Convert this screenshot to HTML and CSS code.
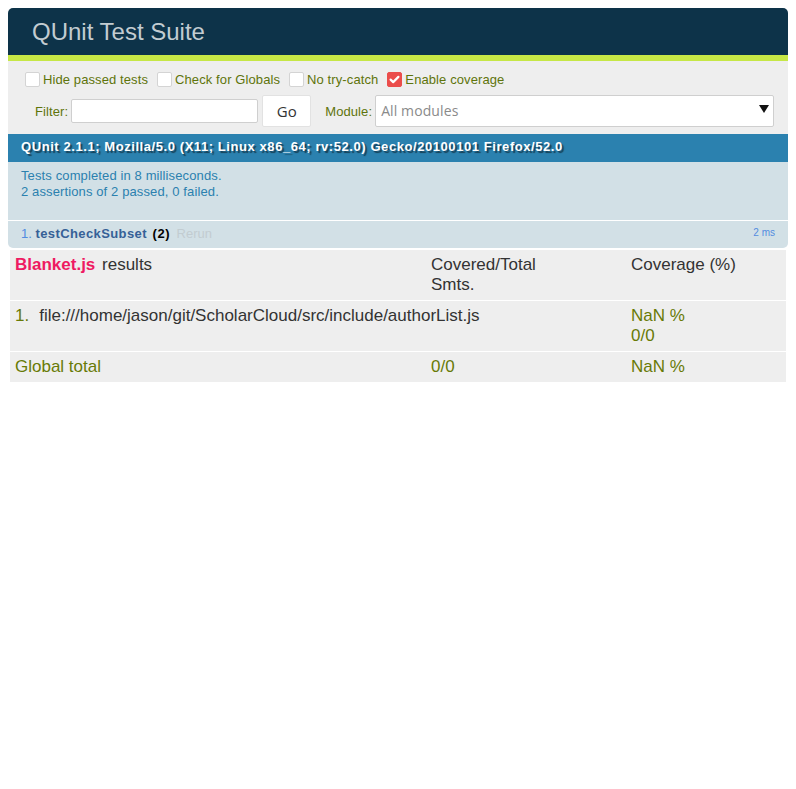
FILE: index.html
```html
<!DOCTYPE html>
<html lang="en">
<head>
<meta charset="utf-8">
<title>QUnit Test Suite</title>
<link rel="stylesheet" href="styles.css">
</head>
<body>
<div class="qunit">
  <h1 class="qunit-header">QUnit Test Suite</h1>
  <div class="qunit-banner"></div>
  <div class="toolbar">
    <div class="opts">
      <label class="opt"><span class="cb"></span>Hide passed tests</label>
      <label class="opt"><span class="cb"></span>Check for Globals</label>
      <label class="opt"><span class="cb"></span>No try-catch</label>
      <label class="opt"><span class="cb checked"><svg viewBox="0 0 15 15" width="15" height="15"><path d="M3.6 7.6 L6.2 10.1 L11.4 4.9" fill="none" stroke="#fff" stroke-width="2.2" stroke-linecap="round" stroke-linejoin="round"/></svg></span>Enable coverage</label>
    </div>
    <div class="filters">
      <span class="flabel">Filter:</span>
      <span class="input"></span>
      <span class="btn">Go</span>
      <span class="mlabel">Module:</span>
      <div class="select"><span>All modules</span><svg class="arrow" viewBox="0 0 10 8" width="10" height="8"><polygon points="0,0 10,0 5,8" fill="#111"/></svg></div>
    </div>
  </div>
  <div class="ua">QUnit 2.1.1; Mozilla/5.0 (X11; Linux x86_64; rv:52.0) Gecko/20100101 Firefox/52.0</div>
  <div class="result">Tests completed in 8 milliseconds.<br>2 assertions of 2 passed, 0 failed.</div>
  <ol class="tests">
    <li class="test pass"><span class="num">1.</span> <strong class="tname">testCheckSubset</strong> <b class="counts">(2)</b> <a class="rerun">Rerun</a><span class="runtime">2 ms</span></li>
  </ol>
</div>
<div class="blanket">
  <div class="brow">
    <div class="bcell"><span class="brand">Blanket.js</span> results</div>
    <div class="bcell">Covered/Total<br>Smts.</div>
    <div class="bcell">Coverage (%)</div>
  </div>
  <div class="brow">
    <div class="bcell"><span class="ok bnum">1.</span>file:///home/jason/git/ScholarCloud/src/include/authorList.js</div>
    <div class="bcell"></div>
    <div class="bcell ok">NaN %<br>0/0</div>
  </div>
  <div class="brow last">
    <div class="bcell ok">Global total</div>
    <div class="bcell ok">0/0</div>
    <div class="bcell ok">NaN %</div>
  </div>
</div>
</body>
</html>
```
FILE: styles.css
```css
body {
  margin: 8px;
  background: #fff;
  font-family: "Liberation Sans", Arial, sans-serif;
}

.qunit {
  font-family: "Liberation Sans", Arial, sans-serif;
}

.qunit-header {
  margin: 0;
  padding: 12px 0 11px 24px;
  font-size: 24px;
  line-height: 24px;
  font-weight: 400;
  color: #c2ccd1;
  background: #0d3349;
  border-radius: 5px 5px 0 0;
}

.qunit-banner {
  height: 6px;
  background: #c6e746;
}

.toolbar {
  background: #eee;
  color: #5e740b;
  padding: 7px 13px;
  font-size: 13px;
  letter-spacing: 0.1px;
}

.opts {
  display: flex;
  align-items: center;
  height: 22px;
  padding-top: 1px;
  box-sizing: border-box;
}

.opt {
  display: flex;
  align-items: center;
  margin-right: 5px;
}

.cb {
  width: 15px;
  height: 15px;
  box-sizing: border-box;
  margin: 0 3px 0 4px;
  background: #fff;
  border: 1px solid #d4d4d4;
  border-radius: 2px;
  display: flex;
}

.cb.checked {
  background: #eb4d4b;
  border-color: #eb4d4b;
}

.cb svg {
  margin: -1px;
}

.filters {
  display: flex;
  align-items: center;
  margin-top: 5px;
  height: 32px;
  padding-left: 14px;
}

.input {
  width: 187px;
  height: 24px;
  box-sizing: border-box;
  margin-left: 3px;
  background: #fff;
  border: 1px solid #cfcfcf;
  border-radius: 2px;
}

.btn {
  width: 49px;
  height: 32px;
  box-sizing: border-box;
  margin-left: 4px;
  background: #fff;
  border: 1px solid #e2e2e2;
  border-radius: 2px;
  display: flex;
  align-items: center;
  justify-content: center;
  font-family: "Open Sans", "Noto Sans", sans-serif;
  font-size: 15px;
  letter-spacing: 0;
  color: #333;
}

.mlabel {
  margin-left: 14px;
}

.select {
  flex: 1;
  height: 32px;
  box-sizing: border-box;
  margin-left: 3px;
  margin-right: 1px;
  background: #fff;
  border: 1px solid #cfcfcf;
  border-radius: 2px;
  display: flex;
  align-items: center;
  justify-content: space-between;
  padding: 0 4px 2px 5px;
  font-family: "Open Sans", "Noto Sans", sans-serif;
  font-size: 14px;
  letter-spacing: 0.1px;
  color: #8a8a8a;
}

.arrow {
  margin-bottom: 3px;
}

.ua {
  background: #2b81af;
  color: #fff;
  font-size: 13px;
  font-weight: 700;
  line-height: 16px;
  padding: 5px 13px 7px;
  letter-spacing: 0.57px;
  text-shadow: rgba(0, 0, 0, 0.5) 2px 2px 1px;
}

.result {
  background: #d2e0e6;
  color: #2b81af;
  font-size: 13px;
  line-height: 16px;
  padding: 6px 13px 20px;
  letter-spacing: 0.12px;
  border-bottom: 1px solid #fff;
}

.tests {
  margin: 0;
  padding: 0;
  list-style: none;
}

.test {
  background: #d2e0e6;
  color: #528ce0;
  font-size: 13px;
  line-height: 17px;
  padding: 4px 13px 6px;
  border-radius: 0 0 5px 5px;
}

.tname {
  color: #366097;
  letter-spacing: 0.4px;
}

.counts {
  color: #000;
  margin-left: 2px;
  letter-spacing: 0.5px;
}

.rerun {
  color: #c2ccd1;
  margin-left: 3px;
}

.runtime {
  float: right;
  font-size: 10px;
  color: #528ce0;
  margin-top: -1px;
}

.blanket {
  margin: 2px 2px 0;
  background: #eee;
  font-size: 17px;
  line-height: 20px;
  color: #333;
}

.brow {
  display: grid;
  grid-template-columns: 416px 200px 1fr;
  border-bottom: 1px solid #fff;
}

.brow.last {
  border-bottom: 0;
}

.bcell {
  padding: 5px 5px 5px;
}

.brand {
  color: #ee1a62;
  font-weight: 700;
  margin-right: 2px;
}

.ok {
  color: #687a06;
}

.bnum {
  margin-right: 10px;
}
```
